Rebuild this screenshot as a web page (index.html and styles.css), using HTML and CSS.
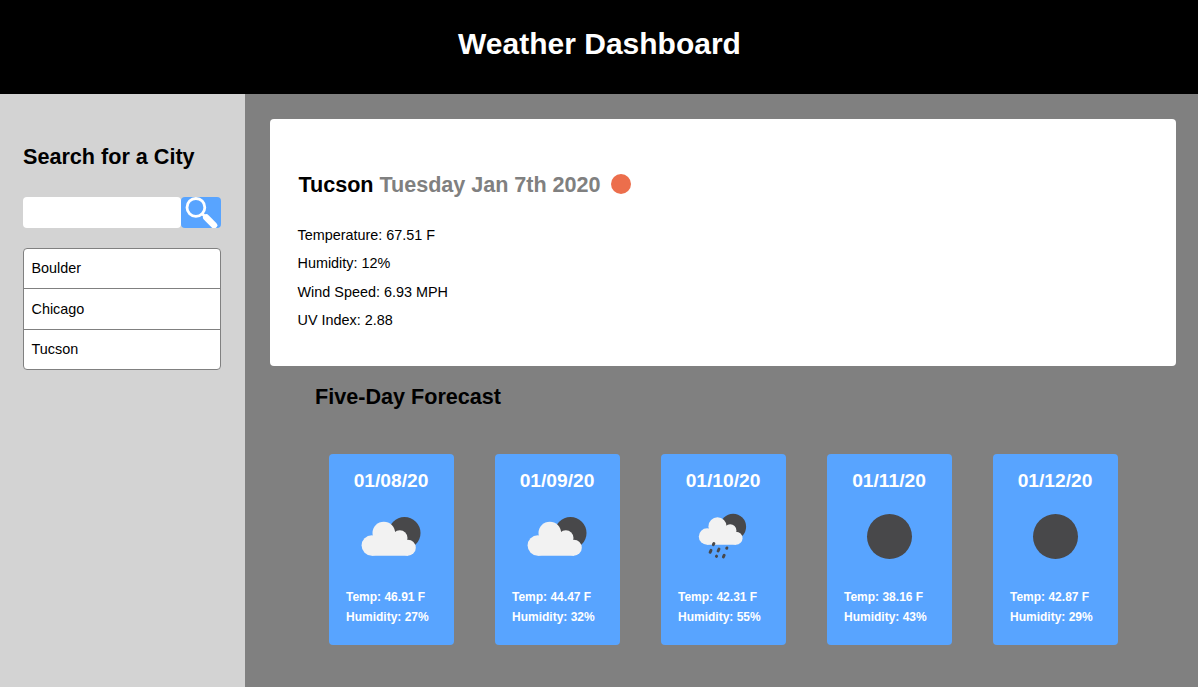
FILE: index.html
```html
<!DOCTYPE html>
<html lang="en">
<head>
<meta charset="utf-8">
<title>Weather Dashboard</title>
<link rel="stylesheet" href="styles.css">
</head>
<body>
<svg width="0" height="0" class="defs" aria-hidden="true">
  <symbol id="cloudy" viewBox="0 0 60 40">
    <circle cx="43.500" cy="17" r="16" fill="#48484a"/>
    <g fill="#f2f2f2">
      <circle cx="10.800" cy="29.500" r="10.200"/>
      <circle cx="22.800" cy="17" r="11.300"/>
      <circle cx="38.800" cy="22" r="7.700"/>
      <circle cx="46.800" cy="31.700" r="8"/>
      <path d="M10.800 39.700V24L22 18l17 0l8 8v13.700z"/>
    </g>
  </symbol>
  <symbol id="rain" viewBox="0 0 50 48">
    <circle cx="35.100" cy="14.700" r="13" fill="#48484a"/>
    <g fill="#f2f2f2">
      <circle cx="9.100" cy="24.500" r="8.300"/>
      <circle cx="19.500" cy="14.400" r="9.100"/>
      <circle cx="32.200" cy="18.500" r="6.200"/>
      <circle cx="38" cy="26.200" r="6.500"/>
      <path d="M9.100 32.800V20L19 15h13l6 6v11.800z"/>
    </g>
    <g stroke="#48484a" stroke-width="2.900" stroke-linecap="round">
      <path d="M15.900 31.500l-.6 1.200M13 38.300l-.9 2M21 37l-.9 2M28.900 35.900l-.2.400M18.600 44.100l-.2.300M26.200 43.200l-.8 1.700"/>
    </g>
  </symbol>
</svg>
<header class="header"><h1>Weather Dashboard</h1></header>
<div class="layout">
  <aside class="sidebar">
    <h2>Search for a City</h2>
    <form class="search">
      <input type="text" aria-label="City">
      <button type="button" aria-label="Search">
        <svg width="40" height="31" viewBox="0 0 40 31"><circle cx="14.900" cy="10.400" r="8.900" fill="none" stroke="#fff" stroke-width="2.800"/><path d="M20.500 16l4 4" stroke="#fff" stroke-width="3"/><path d="M25.300 20.500l7.700 7.700" stroke="#fff" stroke-width="6.400" stroke-linecap="round"/></svg>
      </button>
    </form>
    <ul class="cities"><li>Boulder</li><li>Chicago</li><li>Tucson</li></ul>
  </aside>
  <main class="main">
    <section class="current">
      <h2>Tucson <span class="date">Tuesday Jan 7th 2020</span><span class="sun"></span></h2>
      <p>Temperature: 67.51 F</p>
      <p>Humidity: 12%</p>
      <p>Wind Speed: 6.93 MPH</p>
      <p>UV Index: 2.88</p>
    </section>
    <h2 class="forecast-title">Five-Day Forecast</h2>
    <section class="forecast">
      <article class="card"><h3>01/08/20</h3><div class="icon"><svg width="60" height="40"><use href="#cloudy"/></svg></div><p>Temp: 46.91 F</p><p>Humidity: 27%</p></article>
      <article class="card"><h3>01/09/20</h3><div class="icon"><svg width="60" height="40"><use href="#cloudy"/></svg></div><p>Temp: 44.47 F</p><p>Humidity: 32%</p></article>
      <article class="card"><h3>01/10/20</h3><div class="icon"><svg width="50" height="48"><use href="#rain"/></svg></div><p>Temp: 42.31 F</p><p>Humidity: 55%</p></article>
      <article class="card"><h3>01/11/20</h3><div class="icon"><span class="moon"></span></div><p>Temp: 38.16 F</p><p>Humidity: 43%</p></article>
      <article class="card"><h3>01/12/20</h3><div class="icon"><span class="moon"></span></div><p>Temp: 42.87 F</p><p>Humidity: 29%</p></article>
    </section>
  </main>
</div>
</body>
</html>
```
FILE: styles.css
```css
* { box-sizing: border-box; }
body {
  margin: 0;
  height: 687px;
  display: flex;
  flex-direction: column;
  overflow: hidden;
  font-family: "Liberation Sans", Arial, sans-serif;
  font-size: 14.4px;
  color: #000;
}
h1, h2, h3, p, ul { margin: 0; padding: 0; }
.defs { display: none; }
.header {
  height: 94px;
  padding: 26px 0 0 1px;
  background: #000;
  color: #fff;
  text-align: center;
}
h1 { font-size: 30px; line-height: 35px; }
h2 { font-size: 21.6px; line-height: 26px; }
.layout { display: flex; flex: 1; }
.sidebar { width: 245px; padding: 50px 24px 0 23px; background: #d3d3d3; }
.search { display: flex; margin: 27px 0 20px; height: 31px; }
.search input { width: 158px; border: 0; border-radius: 4px; background: #fff; }
.search button { width: 40px; padding: 0; border: 0; border-radius: 4px; background: #58a4ff; }
.search svg { display: block; }
.cities {
  list-style: none;
  border: 1px solid #808080;
  border-radius: 4px;
  background: #fff;
  height: 122px;
  display: grid;
  grid-template-rows: 39px 41px 40px;
}
.cities li { padding: 0 7.5px; line-height: 39px; }
.cities li + li { border-top: 1px solid #808080; }
.cities li:nth-child(2) { line-height: 41px; }
.main { flex: 1; padding: 25px 22px 0 25px; background: #808080; }
.current { height: 247px; padding: 53px 28px 0 27.5px; border-radius: 4px; background: #fff; }
.current h2 { display: flex; align-items: center; margin: 0 0 23px 1px; white-space: pre; letter-spacing: -0.03px; }
.date { color: #808080; }
.sun { width: 20px; height: 20px; margin: -2px 0 0 10px; border-radius: 50%; background: #ec6e4c; }
.current p { line-height: 28.4px; }
.forecast-title { margin: 18px 0 0 45px; }
.forecast { display: flex; gap: 41px; margin: 44px 0 0 59px; }
.card { width: 125px; height: 191px; padding: 15px 17px; border-radius: 4px; background: #58a4ff; color: #fff; }
.card h3 { margin-right: 1px; font-size: 19.2px; line-height: 23px; text-align: center; }
.icon { display: flex; align-items: center; justify-content: center; height: 88px; margin: 0 1px 7px 0; }
.moon { width: 45px; height: 45px; margin-left: 1px; border-radius: 50%; background: #48484a; }
.card p { font-size: 12px; font-weight: bold; line-height: 20px; white-space: nowrap; }
```
